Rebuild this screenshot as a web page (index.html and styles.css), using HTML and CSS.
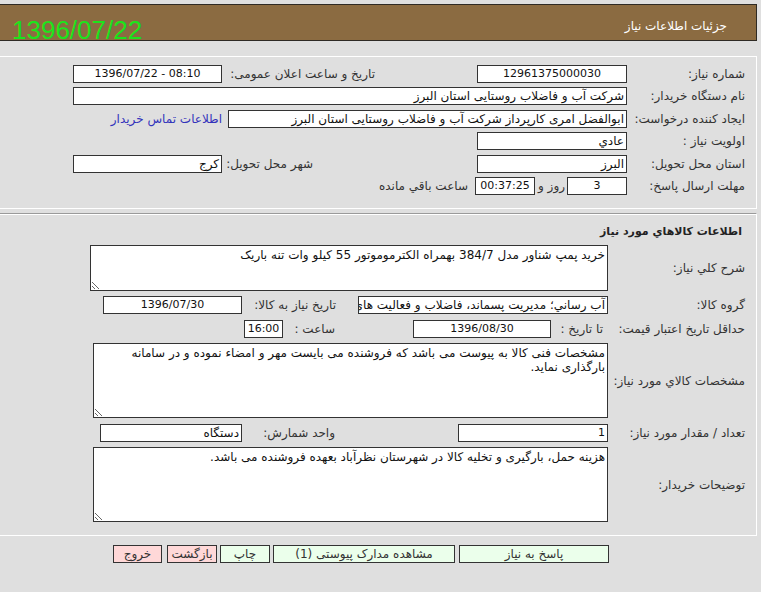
FILE: index.html
```html
<!DOCTYPE html>
<html lang="fa" dir="rtl">
<head>
<meta charset="utf-8">
<title>جزئیات اطلاعات نیاز</title>
<link rel="stylesheet" href="styles.css">
</head>
<body>
<div class="page">
  <header class="topbar"><span class="title">جزئیات اطلاعات نیاز</span></header>
  <div class="stamp">1396/07/22</div>

  <section class="panel p1">
    <div class="row">
      <span class="lbl w118">شماره نیاز:</span>
      <span class="field center num w150">12961375000030</span>
      <span class="lbl push w153">تاریخ و ساعت اعلان عمومی:</span>
      <span class="field center num w149" dir="ltr">1396/07/22 - 08:10</span>
    </div>
    <div class="row">
      <span class="lbl w118">نام دستگاه خریدار:</span>
      <span class="field w554">شرکت آب و فاضلاب روستایی استان البرز</span>
    </div>
    <div class="row">
      <span class="lbl w118">ایجاد کننده درخواست:</span>
      <span class="field w399">ابوالفضل امری کارپرداز شرکت آب و فاضلاب روستایی استان البرز</span>
      <a class="link" href="#">اطلاعات تماس خریدار</a>
    </div>
    <div class="row">
      <span class="lbl w118">اولویت نیاز :</span>
      <span class="field w150">عادي</span>
    </div>
    <div class="row">
      <span class="lbl w118">استان محل تحویل:</span>
      <span class="field w150">البرز</span>
      <span class="lbl push w91">شهر محل تحویل:</span>
      <span class="field w149">کرج</span>
    </div>
    <div class="row">
      <span class="lbl w118">مهلت ارسال پاسخ:</span>
      <span class="field center num w60">3</span>
      <span class="txt w30">روز و</span>
      <span class="field center num w60">00:37:25</span>
      <span class="txt rest">ساعت باقي مانده</span>
    </div>
  </section>

  <section class="panel p2">
    <h2 class="heading">اطلاعات کالاهاي مورد نیاز</h2>
    <div class="row tall">
      <span class="lbl w137">شرح کلي نیاز:</span>
      <textarea class="area w518 h46" readonly>خرید پمپ شناور مدل 384/7 بهمراه الکترموموتور 55 کیلو وات تنه باریک</textarea>
    </div>
    <div class="row">
      <span class="lbl w137">گروه کالا:</span>
      <span class="field w250 clip">آب رساني؛ مديريت پسماند، فاضلاب و فعاليت هاي</span>
      <span class="lbl w94 gap22">تاریخ نیاز به کالا:</span>
      <span class="field center num w139">1396/07/30</span>
    </div>
    <div class="row">
      <span class="lbl w142">حداقل تاریخ اعتبار قیمت:</span>
      <span class="lbl w52">تا تاریخ :</span>
      <span class="field center num w138">1396/08/30</span>
      <span class="lbl w52 gap78">ساعت :</span>
      <span class="field center num w39">16:00</span>
    </div>
    <div class="row tall">
      <span class="lbl w137">مشخصات کالاي مورد نیاز:</span>
      <textarea class="area w515 h75" readonly>مشخصات فنی کالا به پیوست می باشد که فروشنده می بایست مهر و امضاء نموده و در سامانه بارگذاری نماید.</textarea>
    </div>
    <div class="row">
      <span class="lbl w137">تعداد / مقدار مورد نیاز:</span>
      <span class="field num w150">1</span>
      <span class="lbl w93 gap123">واحد شمارش:</span>
      <span class="field w142">دستگاه</span>
    </div>
    <div class="row tall">
      <span class="lbl w137">توضیحات خریدار:</span>
      <textarea class="area w515 h75" readonly>هزینه حمل، بارگیری و تخلیه کالا در شهرستان نظرآباد بعهده فروشنده می باشد.</textarea>
    </div>
  </section>

  <div class="buttons">
    <button class="btn green b150">پاسخ به نیاز</button>
    <button class="btn green b182">مشاهده مدارک پیوستی (1)</button>
    <button class="btn green b50">چاپ</button>
    <button class="btn pink b50">بازگشت</button>
    <button class="btn pink b49">خروج</button>
  </div>
</div>
</body>
</html>
```

FILE: styles.css
```css
html, body {
  margin: 0;
  background: #dfdfdf;
}
body {
  font-family: Tahoma, "DejaVu Sans", sans-serif;
  font-size: 12px;
  color: #333;
}
.page {
  position: relative;
  width: 757px;
  margin-left: 0;
  margin-right: auto;
  padding-top: 4px;
}
.topbar {
  box-sizing: border-box;
  height: 37px;
  background: #8b6b41;
  border: 1px solid #2e2a24;
  border-left: 0;
  display: flex;
  align-items: center;
  padding-right: 29px;
  padding-top: 6px;
}
.title {
  color: #fff;
  font-size: 12px;
}
.stamp {
  position: absolute;
  left: 12px;
  top: 17px;
  font-family: "Liberation Sans", Arial, sans-serif;
  font-size: 26px;
  line-height: 26px;
  color: #1be41b;
  direction: ltr;
}
.panel {
  border-top: 1px solid #fff;
  border-right: 1px solid #fff;
  border-bottom: 1px solid #fff;
}
.p1 {
  margin-top: 15px;
  padding: 8px 11px 13px 73px;
  display: flex;
  flex-direction: column;
  gap: 4.4px;
}
.p2 {
  margin-top: 4px;
  border-top-color: #9a9a9a;
  box-shadow: inset 0 1px 0 #fff;
  padding: 10px 11px 13px 0;
  display: flex;
  flex-direction: column;
  gap: 5.5px;
}
.heading {
  margin: 0 0 -0.5px;
  padding-right: 3px;
  font-size: 11px;
  font-weight: bold;
  line-height: 16px;
  color: #222;
}
.row {
  display: flex;
  align-items: center;
  height: 18px;
}
.row.tall { height: auto; }
.lbl, .txt {
  flex: none;
  white-space: nowrap;
  text-align: right;
  color: #333;
}
.push { margin-right: auto; }
.field {
  flex: none;
  box-sizing: border-box;
  height: 18px;
  line-height: 16px;
  border: 1px solid #333;
  background: #fff;
  color: #111;
  padding: 0 2px;
  white-space: nowrap;
  overflow: hidden;
  text-align: right;
}
.field.center { text-align: center; }
.field.num { font-size: 11px; }
.clip { text-overflow: clip; }
.link {
  margin-right: 6px;
  color: #3333bb;
  text-decoration: none;
  white-space: nowrap;
}
.area {
  flex: none;
  box-sizing: border-box;
  border: 1px solid #333;
  background: #fff;
  color: #111;
  font-family: Tahoma, "DejaVu Sans", sans-serif;
  font-size: 12px;
  line-height: 14px;
  padding: 2px 2px;
  margin: 0;
  direction: rtl;
  overflow: hidden;
}
.txt.w30 { width: 27px; margin: 0 2px 0 3px; }
.txt.rest { margin-right: 7px; }

.w30 { width: 30px; }
.w39 { width: 39px; }
.w52 { width: 52px; }
.w60 { width: 60px; }
.w94 { width: 94px; }
.w91 { width: 91px; }
.w93 { width: 93px; }
.w118 { width: 118px; }
.w137 { width: 137px; }
.w138 { width: 138px; }
.w139 { width: 139px; }
.w142 { width: 142px; }
.w149 { width: 149px; }
.w150 { width: 150px; }
.w153 { width: 153px; }
.w250 { width: 250px; }
.w399 { width: 399px; }
.w515 { width: 515px; }
.w518 { width: 518px; }
.w554 { width: 554px; }
.h46 { height: 46px; }
.h75 { height: 75px; }
.gap22 { margin-right: 22px; }
.gap78 { margin-right: 78px; }
.gap123 { margin-right: 123px; }

.buttons {
  display: flex;
  margin-top: 9px;
  padding-right: 148px;
  gap: 3px;
}
.btn {
  flex: none;
  box-sizing: border-box;
  height: 18px;
  border: 1px solid #333;
  padding: 0 2px;
  font-family: Tahoma, "DejaVu Sans", sans-serif;
  font-size: 12px;
  line-height: 15px;
  color: #333;
  white-space: nowrap;
  overflow: visible;
}
.green { background: #ebffeb; }
.pink { background: #ffd8d8; }
.b150 { width: 150px; }
.b182 { width: 182px; margin-right: 1px; }
.b50 { width: 50px; }
.b49 { width: 49px; margin-right: 2px; }
```
